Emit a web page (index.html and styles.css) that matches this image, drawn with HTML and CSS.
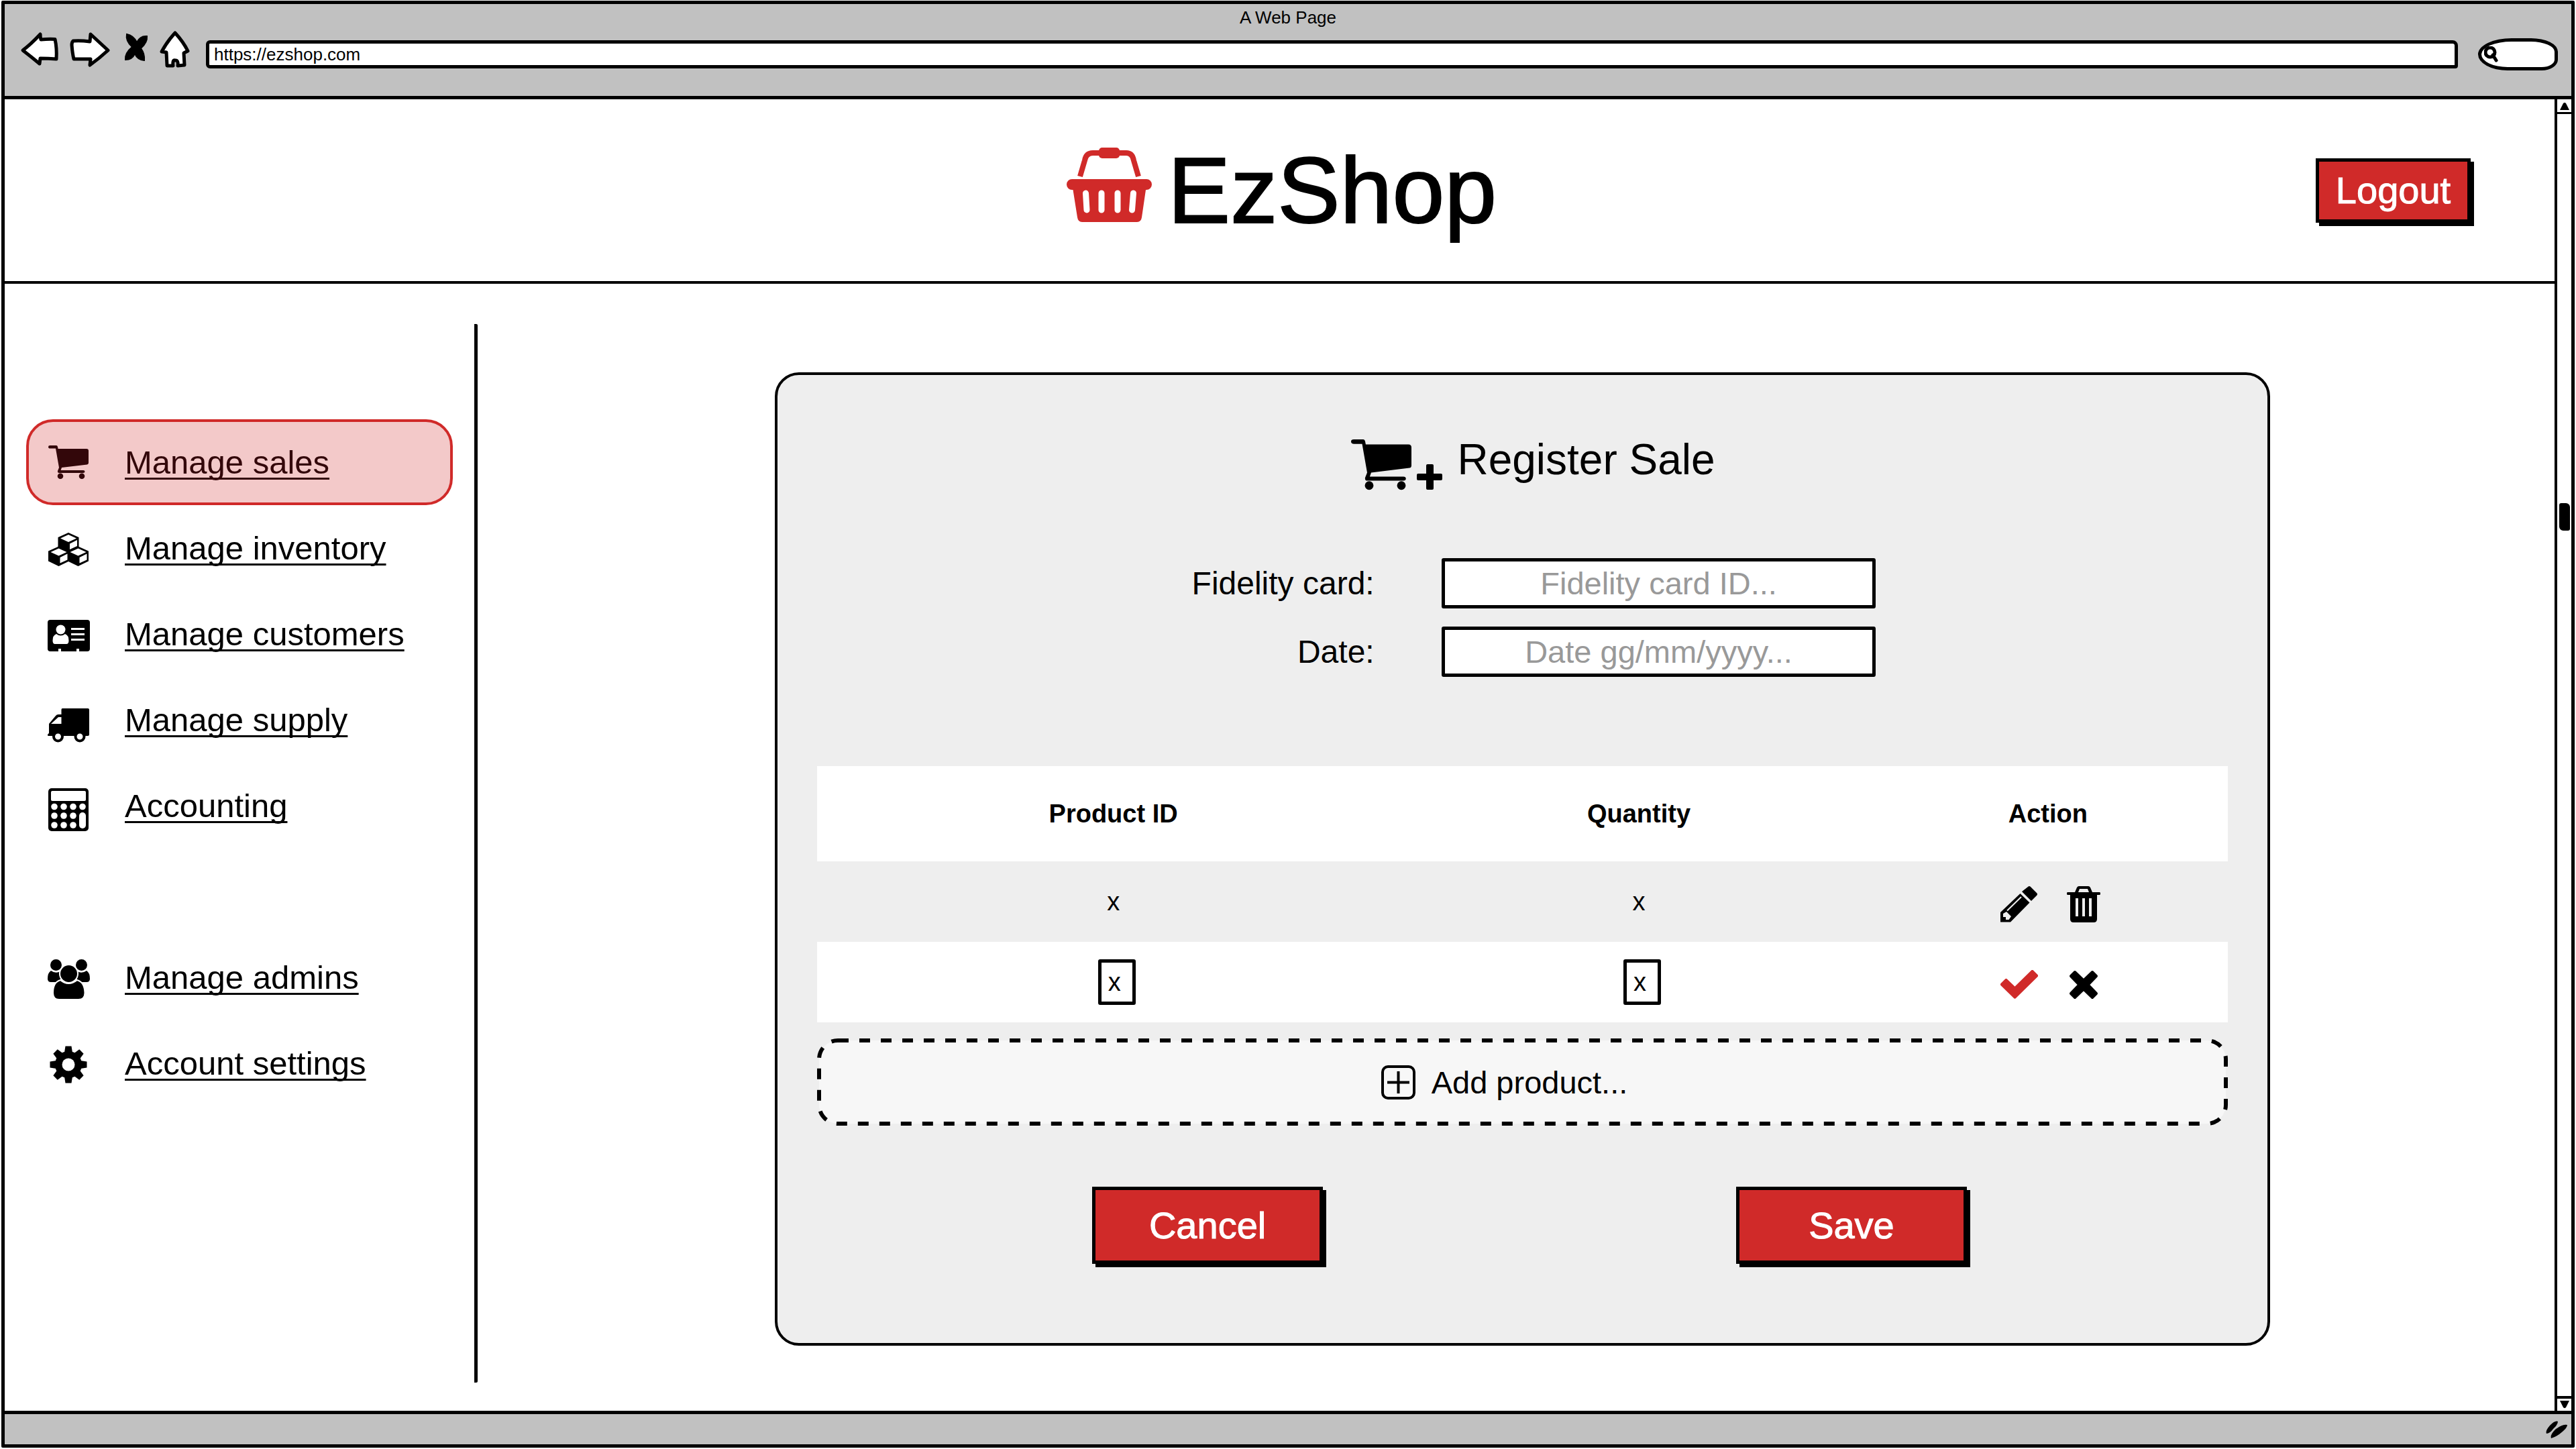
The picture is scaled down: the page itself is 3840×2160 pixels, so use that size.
FILE: index.html
```html
<!DOCTYPE html>
<html lang="en">
<head>
<meta charset="utf-8">
<title>EzShop - Register Sale</title>
<link rel="stylesheet" href="styles.css">
</head>
<body>
<div class="window">
  <div class="chrome">
    <div class="chrome-title">A Web Page</div>
    <div class="toolbar">
      <button class="tool" type="button" aria-label="Back"><svg width="60" height="70" viewBox="30 46 60 70"><path class="outline" d="M34 75Q46 66 60 51Q60 56 61 59Q72 58 82 58.500Q85 72 84 88Q72 87 60 87L59 95Q47 85 34 75Z"/></svg></button>
      <button class="tool" type="button" aria-label="Forward"><svg width="60" height="70" viewBox="104 46 60 70"><path class="outline" d="M109 61Q120 60 134 62L135 51Q147 62 161 75Q148 87 134 97L135 88Q122 88 110 88Q108 80 107 67Q107 63 109 61Z"/></svg></button>
      <button class="tool" type="button" aria-label="Stop"><svg width="46" height="70" viewBox="179 46 46 70"><path d="M190 51Q200 53 205 63Q210 53 220 54Q221 63 211 72Q217 80 216 90Q206 89 202 80Q198 89 188 89Q187 79 198 70Q188 61 190 51Z" stroke="#000" stroke-width="2"/></svg></button>
      <button class="tool" type="button" aria-label="Home"><svg width="48" height="70" viewBox="237 46 48 70"><path class="outline" d="M260 49Q272 62 279 76L273 79L274 97L264 98Q265 89 260 90Q256 89 257 98L248 98L247 78L240 77Q248 62 260 49Z"/></svg></button>
      <input class="url" type="text" aria-label="Address" value="https://ezshop.com">
      <label class="search">
        <svg width="22" height="24" viewBox="0 0 22 24"><circle cx="9" cy="9" r="7" fill="none" stroke="#000" stroke-width="5"/><path d="M13 13L18 21" stroke="#000" stroke-width="5" stroke-linecap="round"/></svg>
        <input type="search" aria-label="Search">
      </label>
    </div>
  </div>

  <div class="viewport">
    <div class="page">
      <header class="header">
        <h1 class="logo">
          <svg width="127" height="128" viewBox="0 0 127 128"><path d="M20 43L27 19Q29 8 39 8H89Q98 8 100 19L107 43" fill="none" stroke="#d02a29" stroke-width="8"/><rect x="48" width="31" height="16" rx="5" fill="#d02a29"/><path fill="#d02a29" d="M8 47H119A8 8 0 0 1 119 63H118L112 104Q111 111 105 111H23Q17 111 16 104L9.500 63H8A8 8 0 0 1 8 47Z"/><path d="M28.500 68L30 93M52 68V93M76 68V93M99.500 68L97.500 93" stroke="#fff" stroke-width="9" stroke-linecap="round"/></svg>
          <span>EzShop</span>
        </h1>
        <button class="btn btn-logout" type="button">Logout</button>
      </header>

      <div class="body">
        <nav class="sidebar">
          <a class="nav-link active" href="#sales">
            <span class="nav-icon"><svg width="60" height="54" viewBox="0 0 60 54" fill="currentColor"><path id="cart" d="M3 0H12Q13.500 0 14 2L14.600 5H57Q60 5 60 8V26Q60 28 58 28.400L20 33L18.600 37H52Q54.500 37 54.500 39T52 41H16Q13.500 41 14 38L16 33L11 4.500H3Q0 4.500 0 2.200T3 0ZM18 41.500A4.300 4.300 0 0 1 18 50.100A4.300 4.300 0 0 1 18 41.500ZM50 41.500A4.300 4.300 0 0 1 50 50.100A4.300 4.300 0 0 1 50 41.500Z"/></svg></span>
            <span class="nav-text">Manage sales</span>
          </a>
          <a class="nav-link" href="#inventory">
            <span class="nav-icon"><svg width="60" height="50" viewBox="0 0 60 50"><path id="cube" fill-rule="evenodd" d="M30 0L45.500 7V22L30 29.500L14.500 22V7ZM30 3L18 8.500L30 14L42 8.500ZM32 16.500V25L43 20V11Z"/><use href="#cube" x="-14.500" y="20.500"/><use href="#cube" x="14.500" y="20.500"/></svg></span>
            <span class="nav-text">Manage inventory</span>
          </a>
          <a class="nav-link" href="#customers">
            <span class="nav-icon"><svg width="63" height="47" viewBox="0 0 63 47"><rect width="63" height="47" rx="4"/><g fill="#fff"><circle cx="19.500" cy="14.500" r="7"/><path d="M13 21Q19.500 26 26 21Q31.500 23 31.500 31Q31.500 36 28 36H11Q7.500 36 7.500 31Q7.500 23 13 21ZM35 12H55V15H35ZM35 20H55V23H35ZM35 28H55V31H35ZM16 43H20V47H16ZM43 43H47V47H43Z"/></g></svg></span>
            <span class="nav-text">Manage customers</span>
          </a>
          <a class="nav-link" href="#supply">
            <span class="nav-icon"><svg width="62" height="63" viewBox="0 -12 62 63"><path fill-rule="evenodd" d="M22 0H60Q62 0 62 2V39Q62 41 60 41H1Q0 41 0 39.500T2 37V23L12 11Q13.500 9 16 9H20.500V2Q20.500 0 22 0ZM20.500 13H16L5 23H20.500Z"/><g stroke="#000" stroke-width="4" fill="#fff"><circle cx="15.500" cy="42" r="6.500"/><circle cx="48" cy="42" r="6.500"/></g></svg></span>
            <span class="nav-text">Manage supply</span>
          </a>
          <a class="nav-link" href="#accounting">
            <span class="nav-icon"><svg width="60" height="72" viewBox="0 -8 60 72"><rect width="60" height="64" rx="5"/><g fill="#fff"><rect x="4" y="4" width="52" height="15" rx="2"/><circle cx="9" cy="27.500" r="4.800"/><circle cx="23" cy="27.500" r="4.800"/><circle cx="37" cy="27.500" r="4.800"/><circle cx="51" cy="27.500" r="4.800"/><circle cx="9" cy="41" r="4.800"/><circle cx="23" cy="41" r="4.800"/><circle cx="37" cy="41" r="4.800"/><circle cx="9" cy="55" r="4.800"/><circle cx="23" cy="55" r="4.800"/><circle cx="37" cy="55" r="4.800"/><rect x="46" y="36" width="10" height="24" rx="5"/></g></svg></span>
            <span class="nav-text">Accounting</span>
          </a>
          <a class="nav-link nav-gap" href="#admins">
            <span class="nav-icon"><svg width="63" height="59" viewBox="0 0 63 59"><circle cx="12.500" cy="8.500" r="8.500"/><circle cx="50.500" cy="8.500" r="8.500"/><path d="M5 17Q12 22 19 18V34H5Q0 34 0 29Q0 20 5 17ZM58 17Q51 22 44 18V34H58Q63 34 63 29Q63 20 58 17Z"/><circle cx="31.500" cy="21.500" r="13.500" stroke="#fff" stroke-width="2"/><path stroke="#fff" stroke-width="2" d="M19 31Q31 41 44 31Q55 34 55.500 50Q55.500 60 46 60H17Q8 60 8 50Q8 34 19 31Z"/></svg></span>
            <span class="nav-text">Manage admins</span>
          </a>
          <a class="nav-link" href="#settings">
            <span class="nav-icon"><svg width="56" height="56" viewBox="-28 -28 56 56"><path id="tooth" d="M-6 -18L-4.500 -27.500H4.500L6 -18V18L4.500 27.500H-4.500L-6 18Z"/><use href="#tooth" transform="rotate(45)"/><use href="#tooth" transform="rotate(90)"/><use href="#tooth" transform="rotate(135)"/><circle r="20"/><circle r="9.500" fill="#fff"/></svg></span>
            <span class="nav-text">Account settings</span>
          </a>
        </nav>

        <main class="content">
          <section class="panel">
            <h2 class="panel-title">
              <svg width="136" height="84" viewBox="0 -8 136 84"><use href="#cart" transform="scale(1.500)"/><path d="M114 37H121Q123 37 123 39V51H134Q136 51 136 53V59Q136 61 134 61H123V73Q123 75 121 75H114Q112 75 112 73V61H100Q98 61 98 59V53Q98 51 100 51H112V39Q112 37 114 37Z"/></svg>
              <span>Register Sale</span>
            </h2>

            <div class="form">
              <label for="card">Fidelity card:</label>
              <input id="card" type="text" placeholder="Fidelity card ID...">
              <label for="date">Date:</label>
              <input id="date" type="text" placeholder="Date gg/mm/yyyy...">
            </div>

            <table class="products">
              <thead>
                <tr><th class="col-id">Product ID</th><th class="col-qty">Quantity</th><th>Action</th></tr>
              </thead>
              <tbody>
                <tr>
                  <td>x</td>
                  <td>x</td>
                  <td><div class="actions">
                    <button type="button" aria-label="Edit"><svg width="56" height="54" viewBox="0 0 56 54"><path d="M41 1Q43 -1 45 1L54 10Q56 12 54 14L46 22L32 8ZM29.500 11L43.500 24.500L15 53.500H0V39Z"/><path d="M10 36.500L31 16" stroke="#eee" stroke-width="2"/><path fill="#eee" d="M9 38L16 45L12.500 50H8V46H4V41Z"/></svg></button>
                    <button type="button" aria-label="Delete"><svg width="50" height="54" viewBox="0 0 50 54"><path fill-rule="evenodd" d="M1 9H12L15 2Q16 0 18 0H32Q34 0 35 2L38 9H49Q50 9 50 11T49 13H45V49Q45 54 40 54H10Q5 54 5 49V13H1Q0 13 0 11T1 9ZM17 9H33L31 4H19ZM13 18V45H17V18ZM23 18V45H27V18ZM33 18V45H37V18Z"/></svg></button>
                  </div></td>
                </tr>
                <tr class="editing">
                  <td><input class="cell" type="text" aria-label="Product ID" value="x"></td>
                  <td><input class="cell" type="text" aria-label="Quantity" value="x"></td>
                  <td><div class="actions">
                    <button type="button" aria-label="Confirm"><svg width="56" height="44" viewBox="0 0 56 44"><path d="M2.500 21.500L8.500 15.500L21.500 28L47.500 2.500L53.500 8.500L21.500 40Z" fill="#d02a29" stroke="#d02a29" stroke-width="5" stroke-linejoin="round"/></svg></button>
                    <button type="button" aria-label="Discard"><svg width="44" height="44" viewBox="0 0 44 44"><path d="M9 3L22 15.500L35 3L41 9L28.500 22L41 35L35 41L22 28.500L9 41L3 35L15.500 22L3 9Z" stroke="#000" stroke-width="4" stroke-linejoin="round"/></svg></button>
                  </div></td>
                </tr>
              </tbody>
            </table>

            <button class="add" type="button">
              <svg class="add-frame"><rect x="3" y="3" rx="28"/></svg>
              <svg width="51" height="51" viewBox="0 0 51 51" fill="none" stroke="#000" stroke-width="4"><rect x="2" y="2" width="47" height="47" rx="8"/><path d="M25.500 9V42M9 25.500H42"/></svg>
              <span>Add product...</span>
            </button>

            <div class="buttons">
              <button class="btn" type="button">Cancel</button>
              <button class="btn" type="button">Save</button>
            </div>
          </section>
        </main>
      </div>
    </div>

    <div class="scrollbar">
      <div class="arrow arrow-up"><svg width="16" height="12" viewBox="0 0 16 12"><path d="M1 12L6 2Q8 0 10 2L15 12Z"/></svg></div>
      <div class="track"><div class="thumb"></div></div>
      <div class="arrow arrow-down"><svg width="16" height="12" viewBox="0 0 16 12"><path d="M1 0L6 10Q8 12 10 10L15 0Z"/></svg></div>
    </div>
  </div>

  <div class="statusbar">
    <svg width="34" height="28" viewBox="0 0 34 28"><path d="M1 20Q-1 16 6 8Q14 0 18 2Q18 7 11 13Q6 20 1 20ZM8 27Q6 22 14 14Q25 5 32 7Q32 11 25 17Q16 25 8 27Z"/></svg>
  </div>
</div>
</body>
</html>
```
FILE: styles.css
```css
* {
  box-sizing: border-box;
}

body {
  margin: 0;
  background: #fff;
  color: #000;
  font-family: "Liberation Sans", Arial, sans-serif;
}

button,
input {
  font-family: inherit;
  color: inherit;
}

button {
  padding: 0;
  border: 0;
  background: none;
}

svg {
  display: block;
  flex: none;
}

.window {
  display: flex;
  flex-direction: column;
  min-height: calc(100vh - 3px);
  margin: 1px 2px 2px;
  border: 5px solid #000;
  border-radius: 2px;
}

/* Browser chrome */
.chrome {
  padding-bottom: 27px;
  background: #c1c1c1;
  border-bottom: 5px solid #000;
}

.chrome-title {
  line-height: 40px;
  font-size: 26px;
  text-align: center;
}

.toolbar {
  display: flex;
  align-items: center;
  gap: 14px;
  height: 70px;
  padding: 0 20px 0 23px;
}

.outline {
  fill: #fff;
  stroke: #000;
  stroke-width: 5px;
  stroke-linejoin: round;
}

.url {
  flex: 1;
  min-width: 0;
  height: 42px;
  margin: 0 16px 0 7px;
  padding: 0 7px;
  border: 5px solid #000;
  border-radius: 6px 8px 4px 6px;
  background: #fff;
  font-size: 26px;
}

.search {
  display: flex;
  align-items: center;
  width: 119px;
  height: 48px;
  padding-left: 4px;
  border: 5px solid #000;
  border-radius: 50px 40px 24px 44px / 24px 20px 16px 24px;
  background: #fff;
}

.search input {
  width: 70px;
  border: 0;
  background: none;
  font-size: 26px;
  outline: 0;
}

/* Page */
.viewport {
  display: flex;
  flex: 1;
}

.page {
  display: flex;
  flex: 1;
  flex-direction: column;
  min-width: 0;
}

.header {
  display: grid;
  grid-template-columns: 1fr auto 1fr;
  align-items: center;
  height: 275px;
  padding: 0 125px;
  border-bottom: 4px solid #000;
}

.logo {
  display: flex;
  grid-column: 2;
  align-items: center;
  gap: 24px;
  margin: 0;
  padding-left: 6px;
  font-size: 140px;
  font-weight: 400;
  line-height: 160px;
  -webkit-text-stroke: 2px currentColor;
}

.btn {
  width: 344px;
  height: 115px;
  border: 5px solid #000;
  background: #d02a29;
  box-shadow: 5px 5px 0 #000;
  color: #fff;
  font-size: 56px;
  -webkit-text-stroke: 1px currentColor;
}

.btn-logout {
  grid-column: 3;
  justify-self: end;
  width: 231px;
  height: 96px;
}

.body {
  display: flex;
  flex: 1;
}

.sidebar {
  flex: 0 0 705px;
  margin: 60px 0 42px;
  padding: 142px 32px 0;
  border-right: 5px solid #000;
  border-radius: 2px;
}

.nav-link {
  display: flex;
  align-items: center;
  height: 128px;
  padding-left: 24px;
  border: 4px solid transparent;
  color: #000;
  font-size: 49px;
  text-decoration: none;
}

.nav-link.active {
  border-color: #d02a29;
  border-radius: 40px;
  background: #f3c9c9;
  color: #33070a;
}

.nav-gap {
  margin-top: 128px;
}

.nav-icon {
  display: flex;
  justify-content: center;
  width: 70px;
  margin-right: 49px;
  padding-top: 4px;
}

.nav-text {
  text-decoration: underline;
  text-decoration-thickness: 3px;
  text-decoration-skip-ink: none;
  text-underline-offset: 6px;
}

.content {
  flex: 1;
  min-width: 0;
  padding: 132px 424px 94px 443px;
}

.panel {
  padding: 88px 59px 118px;
  border: 4px solid #000;
  border-radius: 36px;
  background: #eee;
}

.panel-title {
  display: flex;
  align-items: flex-start;
  justify-content: center;
  gap: 22px;
  margin: 0 0 101px;
  padding-left: 32px;
  font-size: 64px;
  font-weight: 400;
  line-height: 76px;
}

.form {
  display: grid;
  grid-template-columns: 39.5% 30.8%;
  gap: 27px 100px;
  align-items: center;
  margin-bottom: 133px;
  font-size: 48px;
}

.form label {
  text-align: right;
}

.form input {
  width: 100%;
  height: 75px;
  padding: 0;
  border: 5px solid #000;
  border-radius: 3px;
  background: #fff;
  font-size: 47px;
  text-align: center;
}

.form input::placeholder {
  color: #999;
  opacity: 1;
}

.products {
  width: 100%;
  border-collapse: collapse;
  table-layout: fixed;
  font-size: 38px;
  text-align: center;
}

.products th,
.products td {
  height: 120px;
  padding: 0;
}

.products th {
  height: 142px;
  background: #fff;
}

.products .editing td {
  padding-left: 10px;
  background: #fff;
}

.products .editing td:last-child {
  padding-left: 0;
}

.products .col-id {
  width: 42%;
}

.products .col-qty {
  width: 32.5%;
}

.cell {
  display: block;
  width: 56px;
  height: 68px;
  margin: 0 auto;
  padding: 0 0 0 10px;
  border: 5px solid #000;
  border-radius: 3px;
  background: #fff;
  font-size: 38px;
}

.actions {
  display: flex;
  justify-content: center;
  gap: 40px;
  padding: 8px 0 0 10px;
}

.actions button {
  display: flex;
  align-items: center;
  justify-content: center;
  width: 56px;
  height: 56px;
}

.add {
  position: relative;
  display: flex;
  align-items: center;
  justify-content: center;
  gap: 24px;
  width: 100%;
  height: 130px;
  margin: 24px 0 91px;
  padding-right: 54px;
  font-size: 47px;
}

.add span,
.add svg {
  position: relative;
}

/* Dashed outline drawn behind the label */
.add .add-frame {
  position: absolute;
  inset: 0;
  width: 100%;
  height: 100%;
}

.add-frame rect {
  width: calc(100% - 6px);
  height: calc(100% - 6px);
  fill: #f7f7f7;
  stroke: #000;
  stroke-width: 6px;
  stroke-dasharray: 16 16;
}

.buttons {
  display: flex;
  justify-content: space-between;
  padding: 0 18.5% 0 19.5%;
}

/* Scrollbar */
.scrollbar {
  display: flex;
  flex-direction: column;
  width: 25px;
  border-left: 4px solid #000;
}

.arrow {
  display: flex;
  align-items: center;
  justify-content: center;
  height: 22px;
}

.arrow-up {
  border-bottom: 3px solid #000;
}

.arrow-down {
  border-top: 4px solid #000;
}

.track {
  display: grid;
  flex: 1;
  grid-template-rows: 31fr 41px 69fr;
  justify-items: center;
}

.thumb {
  grid-row: 2;
  width: 16px;
  border-radius: 3px 6px;
  background: #000;
}

.statusbar {
  display: flex;
  align-items: center;
  justify-content: flex-end;
  height: 50px;
  padding-right: 4px;
  border-top: 5px solid #000;
  background: #c1c1c1;
}
```
